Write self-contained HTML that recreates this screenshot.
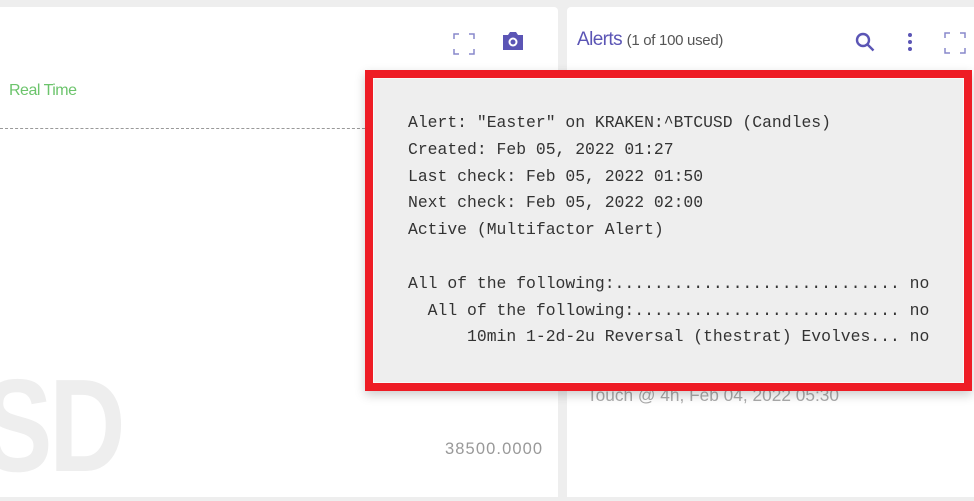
<!DOCTYPE html>
<html><head><style>
body{margin:0;width:974px;height:493px;background:#eeeeee;position:relative;overflow:hidden;font-family:"Liberation Sans",sans-serif}
.p{position:absolute;background:#fff}
.mono{font-family:"Liberation Mono",monospace;font-size:16.4px;color:#333;white-space:pre;position:absolute;left:408px;line-height:26.8px;top:110px}
</style></head><body>
<div class="p" style="left:0;top:7px;width:558px;height:490px;border-radius:0 4px 0 0"></div>
<div class="p" style="left:567px;top:7px;width:407px;height:490px;border-radius:4px 0 0 0"></div>
<div style="position:absolute;left:-18px;top:350px;font-size:132px;font-weight:bold;color:#eeeeee;letter-spacing:-4px;transform:scaleX(0.8);transform-origin:left top">SD</div>
<div style="position:absolute;left:9px;top:82px;font-size:16px;color:#6cc46c;letter-spacing:-0.5px">Real Time</div>
<div style="position:absolute;left:0;top:128px;width:370px;border-top:1px dashed #999"></div>
<div style="position:absolute;left:445px;top:440px;font-size:16.5px;color:#999;letter-spacing:1.1px">38500.0000</div>
<div style="position:absolute;left:587px;top:385px;font-size:17.3px;color:#aaa">Touch @ 4h, Feb 04, 2022 05:30</div>
<svg style="position:absolute;left:453px;top:33px" width="22" height="22" viewBox="0 0 22 22" fill="none" stroke="#8888cc" stroke-width="1.5"><path d="M1 6V1h5M16 1h5v5M21 16v5h-5M6 21H1v-5"/></svg>
<svg style="position:absolute;left:501px;top:30px" width="24" height="22" viewBox="0 0 24 22"><path d="M2 5h5l2-3h6l2 3h5v15H2z" fill="#5b55b5"/><circle cx="12" cy="12" r="4.5" fill="#fff"/><circle cx="12" cy="12" r="2.5" fill="#5b55b5"/></svg>
<div style="position:absolute;left:577px;top:29px;font-size:19px;color:#5b55b5;letter-spacing:-0.6px">Alerts <span style="font-size:15px;color:#555;letter-spacing:-0.3px">(1 of 100 used)</span></div>
<svg style="position:absolute;left:854px;top:31px" width="22" height="22" viewBox="0 0 22 22" fill="none" stroke="#5b55b5" stroke-width="2.4"><circle cx="9" cy="9" r="6"/><path d="M13.5 13.5l6 6"/></svg>
<svg style="position:absolute;left:906px;top:32px" width="8" height="20"><circle cx="4" cy="3" r="2" fill="#5b55b5"/><circle cx="4" cy="10" r="2" fill="#5b55b5"/><circle cx="4" cy="17" r="2" fill="#5b55b5"/></svg>
<svg style="position:absolute;left:944px;top:32px" width="22" height="22" viewBox="0 0 22 22" fill="none" stroke="#8888cc" stroke-width="1.5"><path d="M1 6V1h5M16 1h5v5M21 16v5h-5M6 21H1v-5"/></svg>
<div style="position:absolute;left:365px;top:70px;width:591px;height:305px;border:8px solid #ee1c25;background:#eeeeee;box-shadow:0 4px 10px rgba(0,0,0,0.2)"><div style="position:absolute;inset:0;border:1px solid #f8f8f8"></div></div>
<div class="mono">Alert: "Easter" on KRAKEN:^BTCUSD (Candles)
Created: Feb 05, 2022 01:27
Last check: Feb 05, 2022 01:50
Next check: Feb 05, 2022 02:00
Active (Multifactor Alert)

All of the following:............................. no
  All of the following:........................... no
      10min 1-2d-2u Reversal (thestrat) Evolves... no</div>
</body></html>
